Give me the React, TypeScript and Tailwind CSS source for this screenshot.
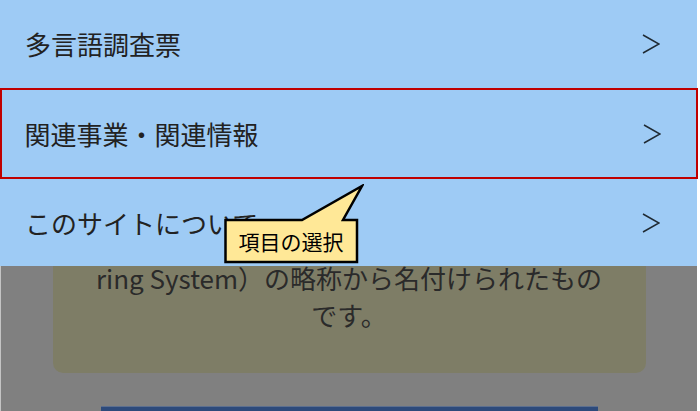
import React from "react";

const items = [
    { label: "多言語調査票", selected: false },
    { label: "関連事業・関連情報", selected: true },
    { label: "このサイトについて", selected: false },
];

const Chevron = () => (
    <svg width="18" height="20" viewBox="0 0 18 20" fill="none">
        <polyline points="1,1 17,10 1,19" stroke="#1f2a33" strokeWidth="1.5" strokeLinejoin="miter" />
    </svg>
);

const Callout = () => (
    <div className="absolute left-[224px] top-[184px] w-[140px] h-[80px]">
        <svg width="140" height="80" viewBox="0 0 140 80" className="absolute inset-0">
            <path d="M1.5 36 H78 L138 2 L119 36 H133 V78 H1.5 Z" fill="#ffe897" stroke="#000" strokeWidth="2.5" strokeLinejoin="miter" />
        </svg>
        <div className="absolute left-[1px] top-[36px] w-[132px] h-[42px] flex items-center justify-center text-[21px] text-black leading-none">
            項目の選択
        </div>
    </div>
);

const App = () => {
    return (
        <div className="relative w-[700px] h-[411px] overflow-hidden bg-white font-['Noto_Sans_CJK_JP','Noto_Sans',sans-serif]">
            {/* page behind the menu */}
            <div className="w-[697px] h-[411px] bg-[#808080] border-l border-[#c4c4c4] flex flex-col items-center pt-[240px]">
                <div className="w-[593px] bg-[#7e7d66] rounded-[10px] pt-[19px] pb-[40px] text-center text-[26px] leading-[37px] text-[#2a2a2a]">
                    <div>ring System）の略称から名付けられたもの</div>
                    <div>です。</div>
                </div>
                <div className="mt-[33px] w-[497px] h-[40px] bg-[#2d4a7b] border-t border-[#5c6f8f]"></div>
            </div>

            {/* slide-down menu */}
            <div className="absolute top-0 left-0 w-[697px] bg-[#9ecbf5] flex flex-col text-[26px] text-[#222]">
                {items.map((item, idx) => (
                    <div
                        key={idx}
                        className={
                            item.selected
                                ? "h-[91px] w-[698px] border-[2.5px] border-[#c00000] flex items-center justify-between pl-[22.5px] pr-[35.5px]"
                                : idx === 0
                                ? "h-[88px] flex items-center justify-between pl-[25px] pr-[37px]"
                                : "h-[87px] flex items-center justify-between pl-[25px] pr-[37px]"
                        }
                    >
                        <span className="leading-none">{item.label}</span>
                        <Chevron />
                    </div>
                ))}
            </div>

            <Callout />
        </div>
    );
};

export default App;
